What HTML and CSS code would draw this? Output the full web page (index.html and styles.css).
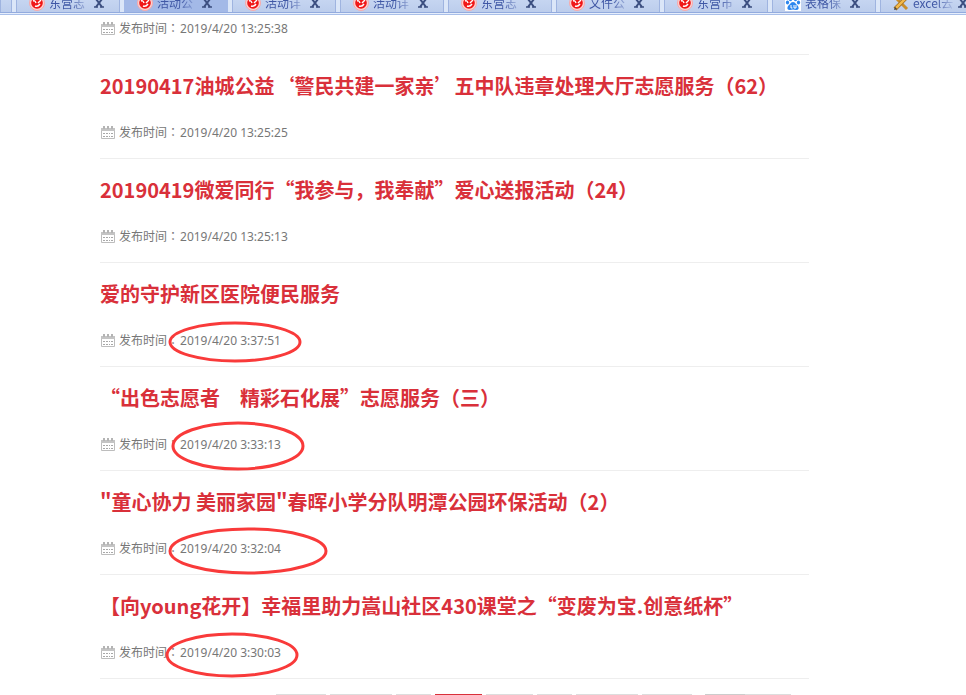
FILE: index.html
```html
<!DOCTYPE html>
<html lang="zh-CN">
<head>
	<meta charset="utf-8">
	<title>活动公示</title>
	<link rel="stylesheet" href="styles.css">
</head>
<body>
	<svg class="sprites">
		<symbol id="calendar" viewBox="0 0 14 13">
			<path d="M0.5 2.5h13v10h-13z" fill="#fff" stroke="#bdbdbd"/>
			<path d="M0 2h14v3H0z" fill="#c4c4c4"/>
			<path d="M2 0h2v3H2zM6 0h2v3H6zM10 0h2v3h-2z" fill="#b4b4b4"/>
			<path d="M2 7h2v1H2zM5 7h2v1H5zM8 7h1v1H8zM10 7h2v1h-2zM2 10h2v1H2zM5 10h2v1H5zM8 10h1v1H8zM10 10h2v1h-2z" fill="#a8a8a8"/>
		</symbol>
		<symbol id="heart" viewBox="0 0 16 16">
			<circle cx="8" cy="8" r="7.5" fill="#fbd3d3" stroke="#f7a9a9"/>
			<circle cx="8" cy="8" r="5.8" fill="#f01818"/>
			<path d="M4 6q2-1 3 2M9 8l3-3M6 11q3 1 5-2" fill="none" stroke="#fff" stroke-width="1.4"/>
		</symbol>
		<symbol id="paw" viewBox="0 0 16 16">
			<path d="M0 0h16v16H0z" fill="#fff"/>
			<path d="M8 7q2 0 3 2l2 2q2 4-2 4-3-1-6 0-4 0-2-4l2-2q1-2 3-2z" fill="#2b86ee"/>
			<ellipse cx="2.5" cy="7.5" rx="1.6" ry="2" fill="#2b86ee"/>
			<ellipse cx="13.5" cy="7.5" rx="1.6" ry="2" fill="#2b86ee"/>
			<ellipse cx="5.5" cy="4" rx="1.6" ry="2.3" fill="#2b86ee"/>
			<ellipse cx="10.5" cy="4" rx="1.6" ry="2.3" fill="#2b86ee"/>
			<path d="M6 10v3h1.5M9 10v3h2v-3" fill="none" stroke="#fff"/>
		</symbol>
		<symbol id="tools" viewBox="0 0 16 16">
			<path d="M4 4l10 10" stroke="#c98d2c" stroke-width="3"/>
			<path d="M13 3L2 14" stroke="#9a6a20" stroke-width="4"/>
			<path d="M13 3L3 13" stroke="#f2b84a" stroke-width="2.5"/>
			<path d="M1 15l1-3 2 2z" fill="#444"/>
		</symbol>
		<symbol id="close" viewBox="0 0 10 10">
			<path d="M2 1l6 8M8 1l-6 8" stroke="#3c4f80" stroke-width="2"/>
			<path d="M0 9h4M6 9h4" stroke="#3c4f80" stroke-width="1.5"/>
		</symbol>
	</svg>

	<header class="tabs">
		<div class="tab first"></div>
		<div class="tab"><svg class="favicon"><use href="#heart"/></svg><span class="name">东营志</span><button class="close" aria-label="关闭"><svg><use href="#close"/></svg></button></div>
		<div class="tab active"><svg class="favicon"><use href="#heart"/></svg><span class="name">活动公</span><button class="close" aria-label="关闭"><svg><use href="#close"/></svg></button></div>
		<div class="tab"><svg class="favicon"><use href="#heart"/></svg><span class="name">活动详</span><button class="close" aria-label="关闭"><svg><use href="#close"/></svg></button></div>
		<div class="tab"><svg class="favicon"><use href="#heart"/></svg><span class="name">活动详</span><button class="close" aria-label="关闭"><svg><use href="#close"/></svg></button></div>
		<div class="tab"><svg class="favicon"><use href="#heart"/></svg><span class="name">东营志</span><button class="close" aria-label="关闭"><svg><use href="#close"/></svg></button></div>
		<div class="tab"><svg class="favicon"><use href="#heart"/></svg><span class="name">文件公</span><button class="close" aria-label="关闭"><svg><use href="#close"/></svg></button></div>
		<div class="tab"><svg class="favicon"><use href="#heart"/></svg><span class="name">东营市</span><button class="close" aria-label="关闭"><svg><use href="#close"/></svg></button></div>
		<div class="tab"><svg class="favicon"><use href="#paw"/></svg><span class="name">表格保</span><button class="close" aria-label="关闭"><svg><use href="#close"/></svg></button></div>
		<div class="tab"><svg class="favicon"><use href="#tools"/></svg><span class="name">excel去</span><button class="close" aria-label="关闭"><svg><use href="#close"/></svg></button></div>
	</header>

	<main class="list">
		<article class="item cut">
			<p class="meta"><svg class="icon"><use href="#calendar"/></svg>发布时间<span class="mid">：</span><time>2019/4/20 13:25:38</time></p>
		</article>
		<article class="item">
			<h2>20190417油城公益‘警民共建一家亲’五中队违章处理大厅志愿服务（62）</h2>
			<p class="meta"><svg class="icon"><use href="#calendar"/></svg>发布时间<span class="mid">：</span><time>2019/4/20 13:25:25</time></p>
		</article>
		<article class="item">
			<h2>20190419微爱同行“我参与<span class="mid">，</span>我奉献”爱心送报活动（24）</h2>
			<p class="meta"><svg class="icon"><use href="#calendar"/></svg>发布时间<span class="mid">：</span><time>2019/4/20 13:25:13</time></p>
		</article>
		<article class="item">
			<h2>爱的守护新区医院便民服务</h2>
			<p class="meta"><svg class="icon"><use href="#calendar"/></svg>发布时间<span class="mid">：</span><time>2019/4/20 3:37:51</time></p>
		</article>
		<article class="item">
			<h2>“出色志愿者　精彩石化展”志愿服务（三）</h2>
			<p class="meta"><svg class="icon"><use href="#calendar"/></svg>发布时间<span class="mid">：</span><time>2019/4/20 3:33:13</time></p>
		</article>
		<article class="item">
			<h2>"童心协力 美丽家园"春晖小学分队明潭公园环保活动（2）</h2>
			<p class="meta"><svg class="icon"><use href="#calendar"/></svg>发布时间<span class="mid">：</span><time>2019/4/20 3:32:04</time></p>
		</article>
		<article class="item">
			<h2>【向young花开】幸福里助力嵩山社区430课堂之“变废为宝.创意纸杯”</h2>
			<p class="meta"><svg class="icon"><use href="#calendar"/></svg>发布时间<span class="mid">：</span><time>2019/4/20 3:30:03</time></p>
		</article>
		<nav class="pager">
			<span class="page word"></span>
			<span class="page long"></span>
			<span class="page arrow"></span>
			<span class="page num current"></span>
			<span class="page num"></span>
			<span class="page arrow"></span>
			<span class="page long"></span>
			<span class="page word"></span>
			<span class="page jump"></span>
			<span class="page go"></span>
		</nav>
	</main>

	<!-- red circles drawn over the odd times -->
	<svg class="marks" viewBox="0 0 966 695">
		<ellipse cx="235" cy="342" rx="65" ry="19"/>
		<ellipse cx="238" cy="446" rx="65" ry="23"/>
		<ellipse cx="248" cy="551" rx="78" ry="22"/>
		<ellipse cx="232" cy="655" rx="65" ry="21"/>
	</svg>
</body>
</html>
```
FILE: styles.css
```css
body{
	margin:0;
	height:100vh;
	overflow:hidden;
	background:#fff;
	font-family:"Noto Sans CJK SC", sans-serif;
	font-size:12px;
	color:#777;
	}
.sprites{
	display:none;
	}
.tabs{
	display:flex;
	align-items:flex-end;
	gap:4px;
	height:12px;
	overflow:hidden;
	background:#dbe6f8;
	border-bottom:1px solid #93abde;
	box-shadow:0 1px #e6eefb, 0 2px #a9bfe9;
	}
.tab{
	display:flex;
	flex:none;
	align-items:center;
	box-sizing:border-box;
	width:104px;
	height:19px;
	padding:0 15px 0 12px;
	border:solid #9fb4e0;
	border-width:0 1px;
	background:linear-gradient(#cbdaf4, #bccdec);
	}
.tab.first{
	width:12px;
	padding:0;
	}
.tab.active{
	background:#a3b9e7;
	border-color:#a3b9e7;
	}
.favicon{
	flex:none;
	width:16px;
	height:16px;
	}
.name{
	flex:1;
	margin-left:4px;
	overflow:hidden;
	white-space:nowrap;
	line-height:18px;
	color:#3f57a5;
	-webkit-mask-image:linear-gradient(90deg, #000 50%, transparent 95%);
	mask-image:linear-gradient(90deg, #000 50%, transparent 95%);
	}
.close{
	flex:none;
	width:10px;
	height:10px;
	margin:0;
	padding:0;
	border:0;
	background:none;
	}
.close svg{
	display:block;
	width:10px;
	height:10px;
	}
.list{
	margin:0 157px 0 100px;
	padding-top:5px;
	}
.item{
	padding:16px 0;
	border-bottom:1px solid #eee;
	}
.item.cut{
	padding-top:0;
	}
h2{
	margin:0 0 21px;
	font-size:20px;
	line-height:30px;
	font-weight:bold;
	white-space:nowrap;
	color:#d9303a;
	}
.meta{
	display:flex;
	align-items:baseline;
	height:20px;
	margin:0;
	line-height:20px;
	}
.icon{
	align-self:center;
	width:14px;
	height:13px;
	margin:0 4px 0 1px;
	}
/* the TC face centres the full-width colon and comma */
.mid{
	font-family:"Noto Sans CJK TC", sans-serif;
	}
time{
	margin-left:1px;
	font-family:"Noto Sans", sans-serif;
	}
.pager{
	display:flex;
	gap:4px;
	padding:15px 0 0 176px;
	}
.page{
	flex:none;
	box-sizing:border-box;
	height:30px;
	border-top:1px solid #ddd;
	}
.word{
	width:50px;
	}
.long{
	width:62px;
	}
.arrow{
	width:35px;
	}
.num{
	width:47px;
	}
.current{
	border-color:#d9303a;
	}
.jump{
	width:40px;
	margin:0 -4px 0 9px;
	border-color:#ccc;
	}
.go{
	width:46px;
	}
.marks{
	position:absolute;
	top:0;
	left:0;
	width:966px;
	height:695px;
	pointer-events:none;
	fill:none;
	stroke:#f93a3a;
	stroke-width:3px;
	}
```
